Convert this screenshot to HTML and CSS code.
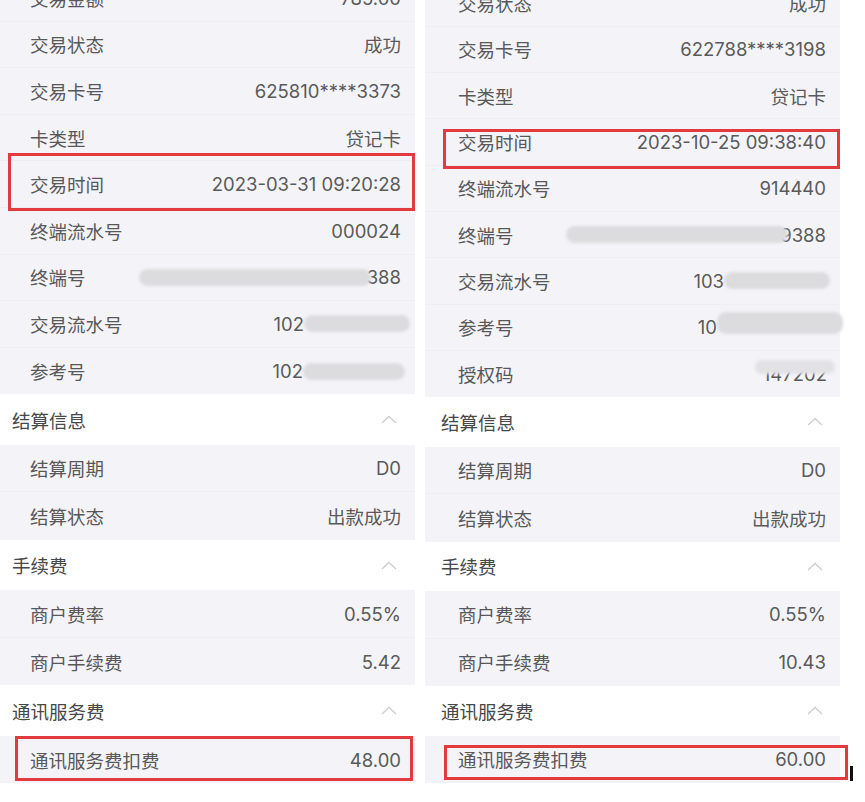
FILE: index.html
```html
<!DOCTYPE html>
<html lang="zh-CN">
<head>
  <meta charset="UTF-8">
  <meta name="viewport" content="width=device-width, initial-scale=1.0">
  <title>交易详情对比</title>
  <link rel="stylesheet" href="styles.css">
</head>
<body>

  <div class="page">

    <!-- 左侧：2023-03-31 交易 -->
    <section class="panel panel-left">
      <div class="list list-top">
        <div class="row"><span class="label">交易金额</span><span class="value">785.00</span></div>
        <div class="row"><span class="label">交易状态</span><span class="value">成功</span></div>
        <div class="row"><span class="label">交易卡号</span><span class="value">625810****3373</span></div>
        <div class="row"><span class="label">卡类型</span><span class="value">贷记卡</span></div>
        <div class="row"><span class="label">交易时间</span><span class="value">2023-03-31 09:20:28</span><i class="mark mark-l1"></i></div>
        <div class="row"><span class="label">终端流水号</span><span class="value">000024</span></div>
        <div class="row"><span class="label">终端号</span><span class="value"><span class="blur blur-term-l"></span>388</span></div>
        <div class="row"><span class="label">交易流水号</span><span class="value">102<span class="blur blur-tail-l"></span></span></div>
        <div class="row"><span class="label">参考号</span><span class="value">102<span class="blur blur-ref-l"></span></span></div>
      </div>

      <div class="group-head">
        <span>结算信息</span>
        <svg class="chevron" viewBox="0 0 16 9"><polyline points="1,8 8,1.5 15,8"/></svg>
      </div>
      <div class="list">
        <div class="row"><span class="label">结算周期</span><span class="value">D0</span></div>
        <div class="row"><span class="label">结算状态</span><span class="value">出款成功</span></div>
      </div>

      <div class="group-head">
        <span>手续费</span>
        <svg class="chevron" viewBox="0 0 16 9"><polyline points="1,8 8,1.5 15,8"/></svg>
      </div>
      <div class="list">
        <div class="row"><span class="label">商户费率</span><span class="value">0.55%</span></div>
        <div class="row"><span class="label">商户手续费</span><span class="value">5.42</span></div>
      </div>

      <div class="group-head">
        <span>通讯服务费</span>
        <svg class="chevron" viewBox="0 0 16 9"><polyline points="1,8 8,1.5 15,8"/></svg>
      </div>
      <div class="list">
        <div class="row"><span class="label">通讯服务费扣费</span><span class="value">48.00</span><i class="mark mark-l2"></i></div>
      </div>
    </section>

    <!-- 右侧：2023-10-25 交易 -->
    <section class="panel panel-right">
      <div class="list list-top">
        <div class="row"><span class="label">交易状态</span><span class="value">成功</span></div>
        <div class="row"><span class="label">交易卡号</span><span class="value">622788****3198</span></div>
        <div class="row"><span class="label">卡类型</span><span class="value">贷记卡</span></div>
        <div class="row"><span class="label">交易时间</span><span class="value">2023-10-25 09:38:40</span><i class="mark mark-r1"></i></div>
        <div class="row"><span class="label">终端流水号</span><span class="value">914440</span></div>
        <div class="row"><span class="label">终端号</span><span class="value"><span class="blur blur-term-r"></span>9388</span></div>
        <div class="row"><span class="label">交易流水号</span><span class="value">103<span class="blur blur-tail-r"></span></span></div>
        <div class="row"><span class="label">参考号</span><span class="value">10<span class="blur blur-ref-r"></span></span></div>
        <div class="row"><span class="label">授权码</span><span class="value">147202<span class="blur blur-auth-r"></span></span></div>
      </div>

      <div class="group-head">
        <span>结算信息</span>
        <svg class="chevron" viewBox="0 0 16 9"><polyline points="1,8 8,1.5 15,8"/></svg>
      </div>
      <div class="list">
        <div class="row"><span class="label">结算周期</span><span class="value">D0</span></div>
        <div class="row"><span class="label">结算状态</span><span class="value">出款成功</span></div>
      </div>

      <div class="group-head">
        <span>手续费</span>
        <svg class="chevron" viewBox="0 0 16 9"><polyline points="1,8 8,1.5 15,8"/></svg>
      </div>
      <div class="list">
        <div class="row"><span class="label">商户费率</span><span class="value">0.55%</span></div>
        <div class="row"><span class="label">商户手续费</span><span class="value">10.43</span></div>
      </div>

      <div class="group-head">
        <span>通讯服务费</span>
        <svg class="chevron" viewBox="0 0 16 9"><polyline points="1,8 8,1.5 15,8"/></svg>
      </div>
      <div class="list">
        <div class="row"><span class="label">通讯服务费扣费</span><span class="value">60.00</span><i class="mark mark-r2"></i><i class="caret"></i></div>
      </div>
    </section>

  </div>

</body>
</html>
```

FILE: styles.css
```css
body {
  margin: 0;
  background-color: #fff;
  font-family: "Noto Sans CJK SC", "Noto Sans", sans-serif;
  color: #585858;
}
.page {
  display: flex;
  gap: 10px;
  width: 865px;
  height: 802px;
  overflow: hidden;
}
.panel {
  width: 415px;
  display: flex;
  flex-direction: column;
  overflow: hidden;
}
.panel-right {
  border-top: 2px solid #86a0c8;
  overflow: visible;
}
.list {
  background-color: #f4f4f8;
  display: flex;
  flex-direction: column;
}
.list-top {
  margin-top: -25px;
}
.panel-right .list-top {
  margin-top: -21.5px;
}
.row {
  position: relative;
  display: flex;
  align-items: center;
  justify-content: space-between;
  height: 47.5px;
  padding: 0 14px 0 30px;
  font-size: 18.5px;
  border-bottom: 1px solid #eeeef2;
  box-sizing: border-box;
}
.list-top .row {
  height: 46.6px;
}
.panel-right .list-top .row {
  height: 46.3px;
}
.row:last-child {
  border-bottom: none;
}
.panel-right .row {
  padding-left: 33px;
}
.label {
  white-space: nowrap;
}
.value {
  display: flex;
  align-items: center;
  white-space: nowrap;
  font-family: "Inter", "Noto Sans CJK SC", sans-serif;
  font-size: 18.5px;
  color: #5a5a5a;
}
.group-head {
  display: flex;
  align-items: center;
  justify-content: space-between;
  height: 50.5px;
  padding: 0 18px 0 12px;
  font-size: 18.5px;
  color: #474747;
}
.panel-left .group-head:first-of-type {
  height: 52px;
}
.panel-right .group-head {
  height: 49.5px;
  padding: 0 17px 0 16px;
}
.chevron {
  width: 16px;
  height: 9px;
  fill: none;
  stroke: #cfcfd2;
  stroke-width: 1.4;
}

/* 打码区域 */
.blur {
  display: inline-block;
  position: relative;
  z-index: 1;
  height: 17px;
  border-radius: 9px;
  background-color: #dcdcdf;
  filter: blur(1.5px);
}
.blur-term-l { width: 232px; margin-right: -4px; }
.blur-tail-l { width: 106px; margin-right: -9px; }
.blur-ref-l { width: 102px; margin-right: -4px; }
.blur-term-r { width: 222px; margin-right: -8px; }
.blur-tail-r { width: 106px; margin-right: -4px; }
.blur-ref-r { width: 126px; margin-right: -17px; top: -4px; height: 22px; }
.blur-auth-r { width: 80px; margin-left: -72px; margin-right: -9px; top: -7px; height: 14px; background-color: #e2e2e5; }

/* 红框标注 */
.mark {
  position: absolute;
  border: 3px solid #e23a3f;
  pointer-events: none;
}
.mark-l1 { top: -8px; bottom: -4px; left: 8px; right: 0; }
.mark-r1 { top: 10px; bottom: -4px; left: 18px; right: 0; }
.mark-l2 { top: 0; bottom: 2px; left: 15px; right: 2px; }
.mark-r2 { top: 9px; bottom: 3px; left: 19px; right: -8px; }
.caret {
  position: absolute;
  top: 30px;
  right: -13px;
  width: 3px;
  height: 15px;
  background-color: #111;
}
```
